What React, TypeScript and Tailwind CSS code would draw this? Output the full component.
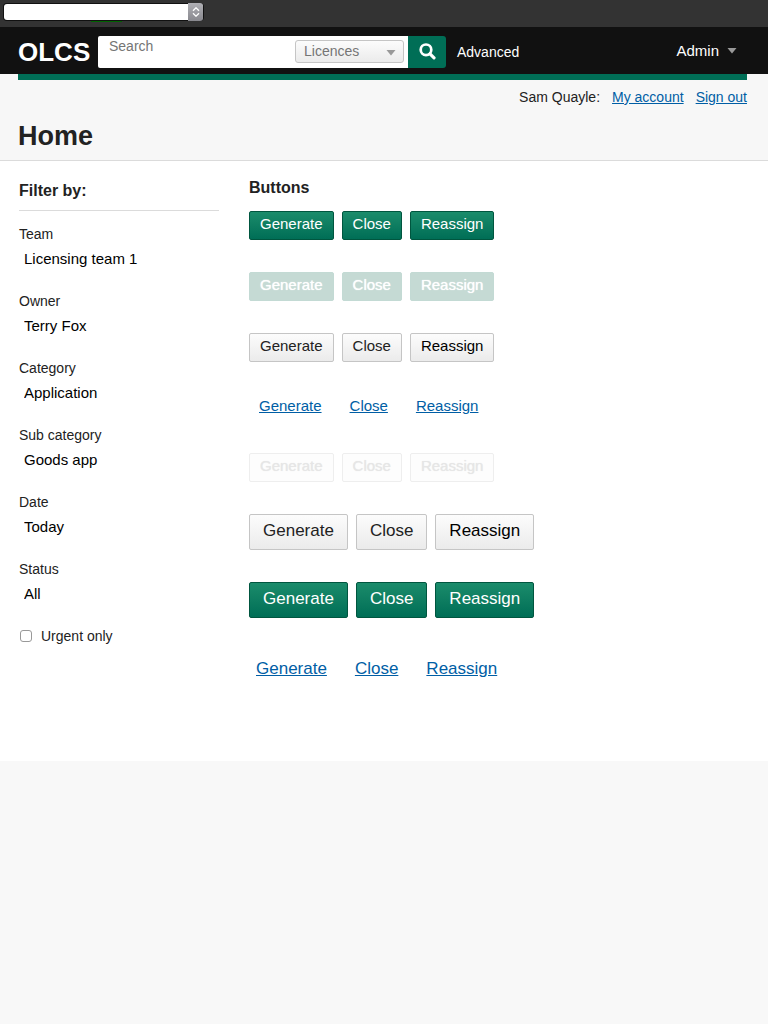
import type { ReactNode } from "react";

const filters = [
  { id: "team", label: "Team", value: "Licensing team 1" },
  { id: "owner", label: "Owner", value: "Terry Fox" },
  { id: "category", label: "Category", value: "Application" },
  { id: "sub-category", label: "Sub category", value: "Goods app" },
  { id: "date", label: "Date", value: "Today" },
  { id: "status", label: "Status", value: "All" },
];

const actions = ["Generate", "Close", "Reassign"];

const small = "h-[29px] px-[10px] pb-[3px] text-[15px] leading-6";
const large = "h-9 px-[13px] pb-[2px] text-[17px] leading-8";
const primary = "border-[#00563f] bg-linear-to-b from-[#1a8c6b] to-[#006e56] text-white";
const secondary = "border-[#c5c5c5] bg-linear-to-b from-[#fcfcfc] to-[#ebebeb] text-[#222]";

function ButtonRow({ look, disabled = false }: { look: string; disabled?: boolean }) {
  return (
    <div className="flex gap-2">
      {actions.map((name) => (
        <button
          key={name}
          type="button"
          disabled={disabled}
          className={`flex items-center justify-center rounded-xs border ${look}`}
        >
          {name}
        </button>
      ))}
    </div>
  );
}

function LinkRow({ look }: { look: string }) {
  return (
    <div className={`flex items-center text-[#005ea5] ${look}`}>
      {actions.map((name) => (
        <a key={name} href="#" className="underline underline-offset-1">
          {name}
        </a>
      ))}
    </div>
  );
}

function Caret({ className }: { className: string }) {
  return (
    <svg viewBox="0 0 10 6" className={`h-[6px] w-[10px] ${className}`} aria-hidden="true">
      <path d="M0.5 0h9L5 5.5z" fill="currentColor" />
    </svg>
  );
}

function Container({ children, className }: { children: ReactNode; className: string }) {
  return <div className={`pr-[21px] pl-[18px] ${className}`}>{children}</div>;
}

export default function App() {
  return (
    <div className="min-h-screen bg-[#f8f8f8] font-['Liberation_Sans',Arial,sans-serif] text-[#222]">
      <div className="h-[27px] bg-[#333] pt-1 pl-1">
        <div className="relative h-4 w-[199px]">
          <div className="absolute top-[17px] left-[87px] h-px w-[31px] bg-[#006400]" />
          <select
            aria-label="Jump to page"
            className="relative block h-4 w-full appearance-none rounded-[3px] bg-white px-1 text-xs text-black shadow-[0_0_0_1px_#111]"
          >
            <option />
          </select>
          <span className="pointer-events-none absolute -top-px right-0 flex h-[18px] w-[15px] items-center justify-center rounded-r-[3px] bg-linear-to-b from-[#b0b0b5] to-[#88888e]">
            <svg viewBox="0 0 8 10" className="h-[10px] w-2" fill="none" stroke="white" strokeWidth="1.3" aria-hidden="true">
              <path d="M1 3.8l3-3 3 3M1 6.2l3 3 3-3" />
            </svg>
          </span>
        </div>
      </div>

      <header className="bg-[#111] text-white">
        <Container className="flex h-[47px] items-center pt-[2px]">
          <a href="#" className="w-20 shrink-0 text-[26px] leading-8 font-bold">
            OLCS
          </a>
          <form className="flex h-8 w-[348px]" onSubmit={(e) => e.preventDefault()}>
            <div className="relative flex min-w-0 grow items-center rounded-l-xs bg-white pr-1">
              <input
                type="text"
                aria-label="Search"
                placeholder="Search"
                className="h-full min-w-0 grow bg-transparent pb-[11px] pl-[11px] text-[14px] text-[#222] outline-none placeholder:text-[#757575]"
              />
              <div className="relative">
                <select
                  aria-label="Search type"
                  className="block h-[23px] w-[109px] appearance-none rounded-[3px] border border-[#c5c5c5] bg-linear-to-b from-[#fcfcfc] to-[#ebebeb] pl-2 text-[14px] text-[#757575]"
                >
                  <option>Licences</option>
                </select>
                <Caret className="pointer-events-none absolute top-[10px] right-2 text-[#999]" />
              </div>
            </div>
            <button
              type="submit"
              aria-label="Submit search"
              className="flex w-[38px] shrink-0 items-center justify-center rounded-r-[3px] bg-[#006e56] pb-px"
            >
              <svg viewBox="0 0 17 17" className="size-[17px]" fill="none" stroke="white" aria-hidden="true">
                <circle cx="7" cy="6.8" r="5.3" strokeWidth="2.7" />
                <path d="M11 10.8l4 4" strokeWidth="3.2" strokeLinecap="round" />
              </svg>
            </button>
          </form>
          <a href="#" className="ml-[11px] pt-px text-[14px]">
            Advanced
          </a>
          <button type="button" className="mr-[10px] ml-auto flex items-center gap-2 pb-px text-[15px]">
            Admin
            <Caret className="text-[#999]" />
          </button>
        </Container>
      </header>

      <div className="border-b border-[#dbdbdb] bg-[#f7f7f7]">
        <Container className="h-[86px]">
          <div className="h-[6px] bg-[#006e56]" />
          <nav className="flex justify-end gap-3 pt-[7px] text-[14px] leading-5" aria-label="Account">
            <span>Sam Quayle:</span>
            <a href="#" className="text-[#005ea5] underline underline-offset-1">My account</a>
            <a href="#" className="text-[#005ea5] underline underline-offset-1">Sign out</a>
          </nav>
          <h1 className="pt-[13px] text-[27px] leading-8 font-bold">Home</h1>
        </Container>
      </div>

      <main className="bg-white pb-[75px]">
        <div className="flex gap-[30px] pl-[19px]">
          <aside className="w-[200px] shrink-0 pt-5">
            <h2 className="mb-[15px] border-b border-[#dbdbdb] pb-[9px] text-[16px] leading-5 font-bold">Filter by:</h2>
            <form>
              {filters.map(({ id, label, value }) => (
                <div key={id} className="mb-[18px]">
                  <label htmlFor={id} className="block text-[14px] leading-4">
                    {label}
                  </label>
                  <select id={id} className="block h-[33px] w-full appearance-none pt-px pl-[5px] text-[15px] leading-5 text-black">
                    <option>{value}</option>
                  </select>
                </div>
              ))}
              <label className="flex items-center gap-[9px] pl-px text-[14px] leading-4">
                <input
                  type="checkbox"
                  className="size-3 appearance-none rounded-[3px] border border-[#999] bg-white checked:bg-[#006e56]"
                />
                Urgent only
              </label>
            </form>
          </aside>

          <section className="min-w-0 grow pt-[17px]">
            <h2 className="mb-[13px] text-[16px] leading-5 font-bold">Buttons</h2>
            <div className="flex flex-col gap-8">
              <ButtonRow look={`${small} ${primary}`} />
              <ButtonRow
                disabled
                look={`${small} border-[#c3dad4] bg-[#c5dad4] text-white [text-shadow:0_0_1px_white]`}
              />
              <ButtonRow look={`${small} ${secondary} last:text-black`} />
              <LinkRow look="h-[27px] gap-7 pb-[2px] pl-[10px] text-[15px]" />
              <ButtonRow disabled look={`${small} border-[#eee] bg-[#fdfdfd] text-[#e6e6e6] [text-shadow:0_0_1px_#e6e6e6]`} />
              <ButtonRow look={`${large} ${secondary} last:text-black`} />
              <ButtonRow look={`${large} ${primary}`} />
              <LinkRow look="h-9 gap-7 pt-px pl-[7px] text-[17px]" />
            </div>
          </section>
        </div>
      </main>
    </div>
  );
}
